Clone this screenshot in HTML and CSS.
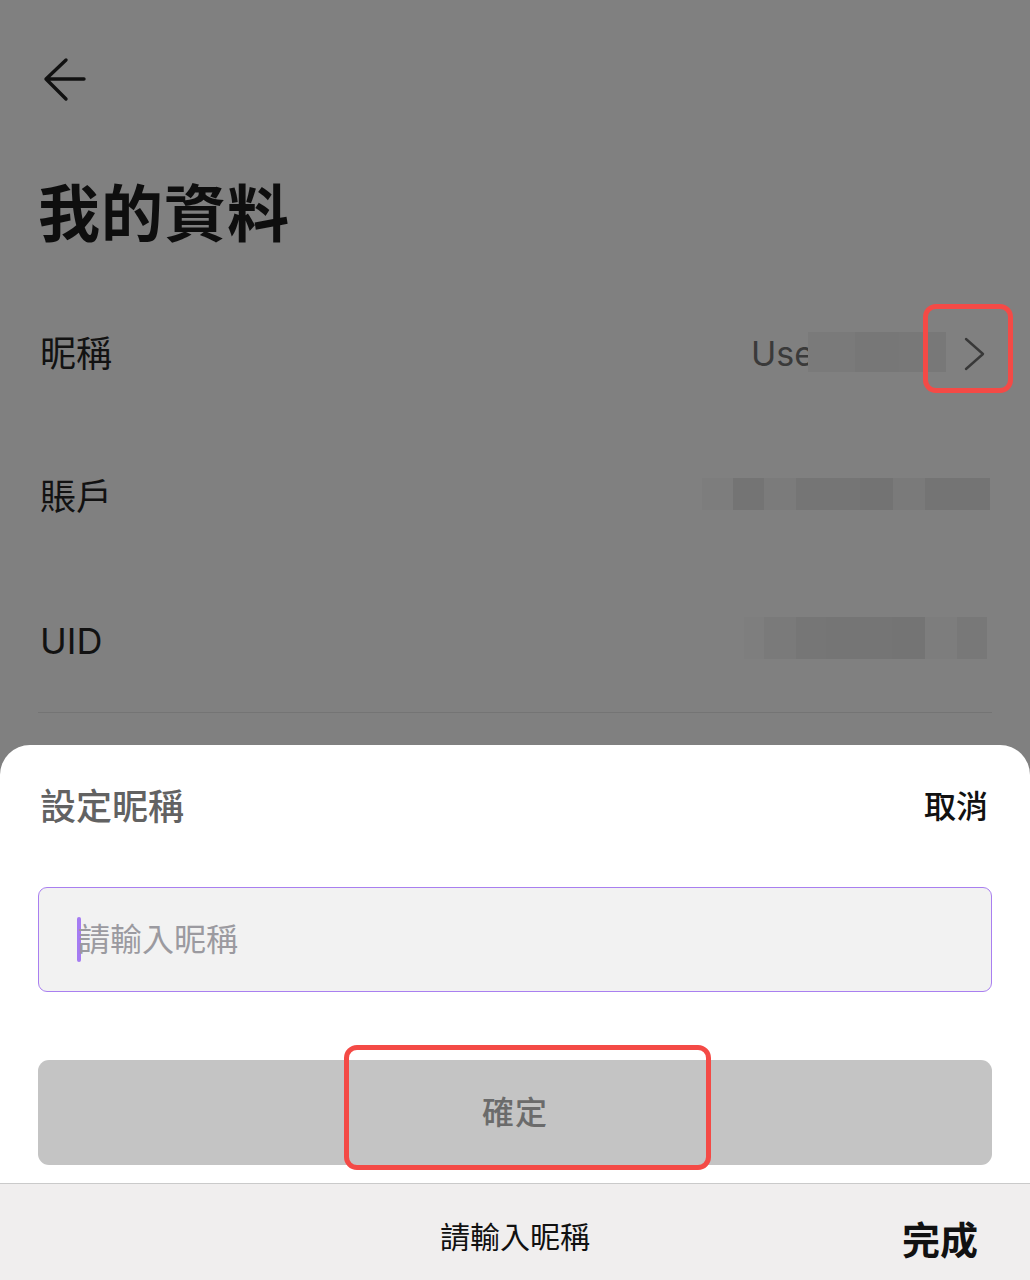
FILE: index.html
```html
<!DOCTYPE html>
<html lang="zh-Hant">
<head>
<meta charset="utf-8">
<title>我的資料</title>
<link rel="stylesheet" href="styles.css">
</head>
<body>
<div class="page">
  <div class="nav">
    <svg class="back" width="48" height="48" viewBox="0 0 48 48" fill="none" stroke="#111" stroke-width="3.4" stroke-linecap="round" stroke-linejoin="round"><path d="M44 23H6M26 4L6 23l20 20"/></svg>
  </div>
  <h1 class="title">我的資料</h1>
  <div class="row">
    <span class="label">昵稱</span>
    <div class="value">
      <span class="use">Use</span>
      <span class="blur blur-name"></span>
      <svg class="chev" width="24" height="34" viewBox="0 0 24 34" fill="none" stroke="#383838" stroke-width="2.4" stroke-linecap="round" stroke-linejoin="round"><path d="M4 2l17 15L4 32"/></svg>
    </div>
  </div>
  <div class="row">
    <span class="label">賬戶</span>
    <span class="blur blur-account"></span>
  </div>
  <div class="row row-last">
    <span class="label">UID</span>
    <span class="blur blur-uid"></span>
  </div>
</div>

<div class="sheet">
  <div class="sheet-head">
    <span class="sheet-title">設定昵稱</span>
    <span class="cancel">取消</span>
  </div>
  <div class="input">
    <span class="caret"></span>
    <span class="placeholder">請輸入昵稱</span>
  </div>
  <div class="btn">確定</div>
  <div class="bar">
    <span></span>
    <span class="bar-text">請輸入昵稱</span>
    <span class="done">完成</span>
  </div>
</div>

<div class="mark mark-chev"></div>
<div class="mark mark-btn"></div>
</body>
</html>
```
FILE: styles.css
```css
* { box-sizing: border-box; margin: 0; padding: 0; }
html, body {
  width: 1030px;
  height: 1280px;
  overflow: hidden;
}
body {
  background: #808080;
  font-family: "Inter", "Noto Sans CJK TC", sans-serif;
  color: #111;
  position: relative;
}
.page {
  padding: 0 38px;
}
.nav {
  height: 160px;
  padding-top: 56px;
}
.back {
  display: block;
  margin-left: 2px;
}
.title {
  height: 122px;
  line-height: 110px;
  font-size: 62px;
  font-weight: 700;
  color: #0e0e0e;
  letter-spacing: 1px;
}
.row {
  height: 143.5px;
  display: flex;
  align-items: center;
  justify-content: space-between;
}
.row-last {
  border-bottom: 1px solid #747474;
  height: 144px;
}
.label {
  font-size: 36px;
  line-height: 44px;
  color: #121212;
  padding-left: 2px;
}
.value {
  display: flex;
  align-items: center;
}
.use {
  font-size: 34px;
  line-height: 44px;
  color: #3a3a3a;
}
.blur { display: block; }
.blur-name {
  width: 138px;
  height: 40px;
  margin-left: -6px;
  margin-top: -4px;
  background: linear-gradient(90deg, #7a7a7a 0 34%, #777 34% 66%, #787878 66% 100%);
}
.chev {
  display: block;
  margin-left: 16px;
  margin-right: 6px;
}
.blur-account {
  width: 288px;
  height: 32px;
  margin-right: 2px;
  margin-top: -6px;
  background: linear-gradient(90deg,
    #7d7d7d 0 31px, #747474 31px 62px, #7b7b7b 62px 94px,
    #757575 94px 158px, #737373 158px 191px, #7a7a7a 191px 223px,
    #747474 223px 288px);
}
.blur-uid {
  width: 243px;
  height: 42px;
  margin-right: 5px;
  margin-top: -6px;
  background: linear-gradient(90deg,
    #7e7e7e 0 20px, #7a7a7a 20px 52px, #767676 52px 82px,
    #757575 82px 148px, #747474 148px 181px, #7d7d7d 181px 213px,
    #787878 213px 243px);
}

/* bottom sheet overlay */
.sheet {
  position: absolute;
  left: 0;
  right: 0;
  top: 745px;
  bottom: 0;
  background: #fff;
  border-radius: 30px 30px 0 0;
  display: flex;
  flex-direction: column;
}
.sheet-head {
  display: flex;
  justify-content: space-between;
  align-items: center;
  padding: 40px 42px 0 40px;
  box-sizing: content-box;
  height: 44px;
}
.sheet-title {
  font-size: 36px;
  line-height: 44px;
  color: #626262;
  font-weight: 500;
}
.cancel {
  font-size: 32px;
  line-height: 44px;
  color: #111;
  font-weight: 500;
}
.input {
  margin: 58px 38px 0;
  height: 105px;
  background: #f2f2f2;
  border: 1.5px solid #a97ff0;
  border-radius: 9px;
  display: flex;
  align-items: center;
  padding-left: 38px;
}
.caret {
  width: 4px;
  height: 45px;
  border-radius: 2px;
  background: #a57cf2;
  margin-top: -1px;
}
.placeholder {
  font-size: 32px;
  line-height: 44px;
  color: #9b9aa0;
  margin-left: -3px;
}
.btn {
  margin: 68px 38px 0;
  height: 105px;
  border-radius: 11px;
  background: #c4c4c4;
  color: #6b6b6b;
  font-size: 32px;
  font-weight: 500;
  display: flex;
  align-items: center;
  justify-content: center;
  letter-spacing: 1px;
  padding-bottom: 6px;
}
.bar {
  margin-top: 18px;
  flex: 1;
  border-top: 1.5px solid #cacaca;
  background: #f0eeee;
  display: grid;
  grid-template-columns: 1fr auto 1fr;
  align-items: center;
  padding: 10px 52px 0;
}
.bar-text {
  font-size: 30px;
  line-height: 40px;
  color: #111;
}
.done {
  justify-self: end;
  font-size: 38px;
  font-weight: 700;
  color: #111;
}

/* annotation marks */
.mark {
  position: absolute;
  border: 5px solid #f44a46;
  border-radius: 13px;
}
.mark-chev {
  left: 923px;
  top: 304px;
  width: 90px;
  height: 89px;
}
.mark-btn {
  left: 344px;
  top: 1045px;
  width: 367px;
  height: 125px;
}
```
